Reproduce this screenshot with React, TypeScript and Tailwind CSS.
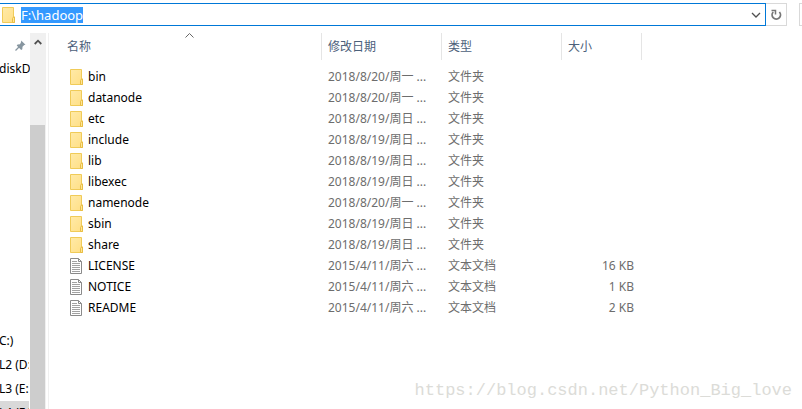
import { useEffect, useRef } from 'react';

type Entry = { name: string; date: string; type: string; size?: string };

const entries: Entry[] = [
  { name: 'bin', date: '2018/8/20/周一 ...', type: '文件夹' },
  { name: 'datanode', date: '2018/8/20/周一 ...', type: '文件夹' },
  { name: 'etc', date: '2018/8/19/周日 ...', type: '文件夹' },
  { name: 'include', date: '2018/8/19/周日 ...', type: '文件夹' },
  { name: 'lib', date: '2018/8/19/周日 ...', type: '文件夹' },
  { name: 'libexec', date: '2018/8/19/周日 ...', type: '文件夹' },
  { name: 'namenode', date: '2018/8/20/周一 ...', type: '文件夹' },
  { name: 'sbin', date: '2018/8/19/周日 ...', type: '文件夹' },
  { name: 'share', date: '2018/8/19/周日 ...', type: '文件夹' },
  { name: 'LICENSE', date: '2015/4/11/周六 ...', type: '文本文档', size: '16 KB' },
  { name: 'NOTICE', date: '2015/4/11/周六 ...', type: '文本文档', size: '1 KB' },
  { name: 'README', date: '2015/4/11/周六 ...', type: '文本文档', size: '2 KB' },
];

const drives = ['C:)', 'L2 (D:)', 'L3 (E:)', 'L4 (F:)'];

function FolderIcon() {
  return (
    <svg width="13" height="16" viewBox="0 0 13 16" className="shrink-0">
      <defs>
        <linearGradient id="folder" x1="0" y1="0" x2="1" y2="1">
          <stop offset="0" stopColor="#ffeaa8" />
          <stop offset="1" stopColor="#ffdf85" />
        </linearGradient>
      </defs>
      <path d="M.5.5h11v9.5h1v5.5H.5z" fill="url(#folder)" stroke="#f0cb58" />
      <path d="M10.5 15.5v-4l1-1.5h1v5.5z" fill="#ffe694" stroke="#e8bd45" />
    </svg>
  );
}

function TextFileIcon() {
  return (
    <svg width="13" height="16" viewBox="0 0 13 16" className="shrink-0">
      <path d="M.5.5h8l3 3v12H.5z" fill="#fff" stroke="#8a8a8a" />
      <path d="M8.5.5v3h3" fill="none" stroke="#8a8a8a" />
      <path d="M2 3.5h5M2 5.5h8M2 7.5h8M2 9.5h8M2 11.5h8M2 13.5h8" stroke="#a2a2a2" />
    </svg>
  );
}

function AddressBar() {
  const input = useRef<HTMLInputElement>(null);

  useEffect(() => {
    input.current?.focus();
    input.current?.select();
  }, []);

  return (
    <header className="flex h-[23px] shrink-0">
      <div className="flex flex-1 items-center border border-l-0 border-[#0078d7] pl-0.5">
        <FolderIcon />
        <input
          ref={input}
          aria-label="地址"
          defaultValue="F:\hadoop"
          className="ml-1.5 h-4 min-w-0 flex-1 text-[13px] leading-4 text-black outline-none selection:bg-[#3399ff] selection:text-white"
        />
        <button aria-label="上一个位置" className="flex h-full w-[18px] items-center justify-center">
          <svg width="10" height="6" viewBox="0 0 10 6">
            <path d="M1 1l4 4 4-4" fill="none" stroke="#505050" strokeWidth="1.3" />
          </svg>
        </button>
      </div>
      <button aria-label="刷新" className="flex w-[21px] items-center justify-center border border-l-0 border-[#d9d9d9]">
        <svg width="12" height="12" viewBox="0 0 12 12">
          <path d="M3.2 3A4.2 4.2 0 1 0 9.4 3" fill="none" stroke="#777" strokeWidth="1.8" />
          <path d="M1.5 1.4h4v4" fill="none" stroke="#777" strokeWidth="1.5" />
        </svg>
      </button>
      <div className="ml-3 w-[3px] border border-r-0 border-[#d9d9d9]" />
    </header>
  );
}

function Sidebar() {
  return (
    <nav className="w-[30px] shrink-0 overflow-hidden whitespace-nowrap text-black">
      <div className="flex h-6 items-center justify-end pr-1">
        <svg width="11" height="11" viewBox="0 0 11 11">
          <path d="M6.2.5l4.3 4.2-1.3.4-1.7 1.7-.2 2.4-1.1.8L1.7 5.6l.9-1 2.4-.3L6.1 2z" fill="#8796a0" />
          <path d="M4 7L.5 10.5" stroke="#8796a0" strokeWidth="1.2" />
        </svg>
      </div>
      <a href="#disk" className="block h-6 -indent-px leading-6">diskD</a>
      <ul className="mt-62">
        {drives.map((drive) => (
          <li key={drive} className="mr-px h-6 overflow-hidden -indent-px leading-6 last:bg-[#d9d9d9]">
            <a href="#drive" className="block">{drive}</a>
          </li>
        ))}
      </ul>
    </nav>
  );
}

function Scrollbar() {
  return (
    <div className="flex w-4 shrink-0 flex-col bg-[#f0f0f0]">
      <button aria-label="向上滚动" className="flex h-[18px] items-center justify-center">
        <svg width="8" height="6" viewBox="0 0 8 6">
          <path d="M.7 5L4 1.7 7.3 5" fill="none" stroke="#505050" strokeWidth="1.8" />
        </svg>
      </button>
      <div className="mt-[74px] mr-px flex-1 bg-[#cdcdcd]" />
    </div>
  );
}

function FileList() {
  const heading = 'border-r border-[#e5e5e5] pl-1.5 text-left font-normal';
  return (
    <main className="ml-0.5 flex-1 border-l border-[#f0f0f0]">
      <table className="table-fixed border-separate border-spacing-0">
        <colgroup>
          <col className="w-[273px]" />
          <col className="w-[120px]" />
          <col className="w-[120px]" />
          <col className="w-20" />
        </colgroup>
        <thead>
          <tr className="h-[27px] text-[#4c607a]">
            <th className="relative border-r border-[#e5e5e5] pl-[18px] text-left font-normal">
              名称
              <svg width="9" height="5" viewBox="0 0 9 5" className="absolute top-0 left-1/2">
                <path d="M.5 4.5l4-4 4 4" fill="none" stroke="#666" />
              </svg>
            </th>
            <th className={heading}>修改日期</th>
            <th className={heading}>类型</th>
            <th className={heading}>大小</th>
          </tr>
        </thead>
        <tbody className="text-[#6d6d6d] before:block before:h-1.5">
          {entries.map((entry) => (
            <tr key={entry.name} className="h-[21px]">
              <td className="pl-[21px] text-black">
                <div className="flex items-center gap-[5px]">
                  {entry.size ? <TextFileIcon /> : <FolderIcon />}
                  {entry.name}
                </div>
              </td>
              <td className="pl-1.5 whitespace-nowrap">{entry.date}</td>
              <td className="pl-1.5">{entry.type}</td>
              <td className="pr-2 text-right">{entry.size}</td>
            </tr>
          ))}
        </tbody>
      </table>
    </main>
  );
}

export default function App() {
  return (
    <div className="relative flex h-screen flex-col overflow-hidden bg-white pt-[3px] font-['Noto_Sans','Noto_Sans_CJK_SC',sans-serif] text-[12px] leading-4">
      <AddressBar />
      <div className="mt-[7px] flex min-h-0 flex-1">
        <Sidebar />
        <Scrollbar />
        <FileList />
      </div>
      <p className="absolute right-2.5 bottom-1.5 font-['Liberation_Mono',monospace] text-[17px] leading-6 text-[#dcdcd8]">
        https://blog.csdn.net/Python_Big_love
      </p>
    </div>
  );
}
